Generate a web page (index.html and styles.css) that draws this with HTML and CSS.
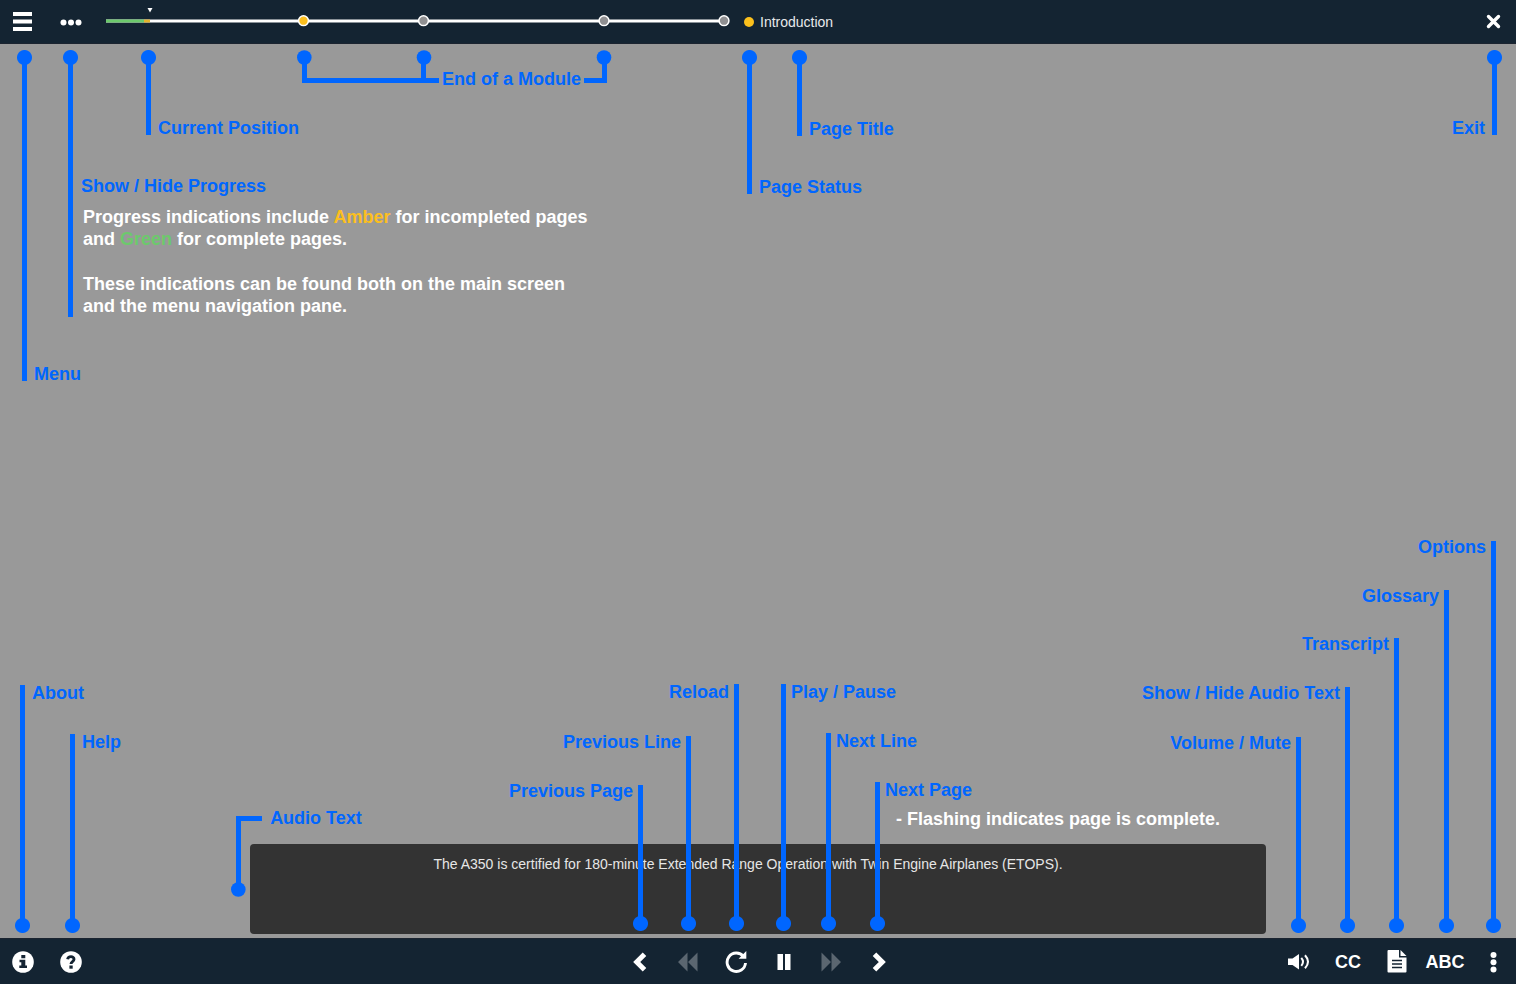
FILE: index.html
```html
<!DOCTYPE html>
<html lang="en">
<head>
<meta charset="utf-8">
<meta name="viewport" content="width=device-width, initial-scale=1">
<title>Introduction</title>
<link rel="stylesheet" href="styles.css">
</head>
<body>
<header class="bar bar-top">
  <div class="group">
    <button class="tool" type="button" aria-label="Menu">
      <svg width="20" height="20" viewBox="0 0 20 20" fill="#fff"><path d="M0 0h19v4H0zM0 7.500h19v4H0zM0 15h19v4H0z"/></svg>
    </button>
    <button class="tool" type="button" aria-label="Show or hide progress">
      <svg width="22" height="8" viewBox="0 0 22 8" fill="#fff"><circle cx="3.500" cy="4.500" r="3"/><circle cx="11" cy="4.500" r="3"/><circle cx="18.500" cy="4.500" r="3"/></svg>
    </button>
  </div>
  <svg class="progress" width="626" height="44" viewBox="0 0 626 44" role="img" aria-label="Course progress">
    <path d="M0 21h620" stroke="#fff" stroke-width="3"/>
    <path d="M0 21h38" stroke="#6cc96c" stroke-width="3"/>
    <path d="M38 21h6" stroke="#e5b32c" stroke-width="3"/>
    <path d="M41.500 8h5l-2.500 4.500z" fill="#fff"/>
    <g stroke="#fff" stroke-width="1.500" fill="#8f8f91">
      <circle cx="197.500" cy="20.700" r="4.900" fill="#fcbf1e"/>
      <circle cx="317.500" cy="20.700" r="4.900"/>
      <circle cx="498" cy="20.700" r="4.900"/>
      <circle cx="618" cy="20.700" r="4.900"/>
    </g>
  </svg>
  <div class="page-info"><span class="status"></span><h1 class="page-title">Introduction</h1></div>
  <button class="tool tool-exit" type="button" aria-label="Exit">
    <svg width="16" height="16" viewBox="0 0 16 16"><path d="M3.500 2.500l10 10M13.500 2.500l-10 10" stroke="#fff" stroke-width="3.400" stroke-linecap="round"/></svg>
  </button>
</header>

<main class="stage">
  <p class="caption">The A350 is certified for 180-minute Extended Range Operation with Twin Engine Airplanes (ETOPS).</p>

  <div class="callout top menu"><i class="pin"></i><p class="label">Menu</p></div>
  <div class="callout top show-progress"><i class="pin"></i>
    <div class="details">
      <p class="label">Show / Hide Progress</p>
      <div class="note">
        <p>Progress indications include <span class="amber">Amber</span> for incompleted pages<br>and <span class="green">Green</span> for complete pages.</p>
        <p>These indications can be found both on the main screen<br>and the menu navigation pane.</p>
      </div>
    </div>
  </div>
  <div class="callout top position"><i class="pin"></i><p class="label">Current Position</p></div>
  <div class="callout module">
    <svg width="142" height="33" viewBox="0 0 142 33" fill="#0066ff"><circle cx="7.300" cy="7.500" r="7.300"/><circle cx="127" cy="7.500" r="7.300"/><path d="M5 7h5v21h114V7h5v21h13v5H5z"/></svg>
    <p class="label">End of a Module</p>
    <svg width="28" height="33" viewBox="0 0 28 33" fill="#0066ff"><circle cx="20" cy="7.500" r="7.300"/><path d="M18 7h5v26H0v-5h18z"/></svg>
  </div>
  <div class="callout top page-status"><i class="pin"></i><p class="label">Page Status</p></div>
  <div class="callout top title"><i class="pin"></i><p class="label">Page Title</p></div>
  <div class="callout top exit"><p class="label">Exit</p><i class="pin"></i></div>

  <div class="callout bottom about"><i class="pin"></i><p class="label">About</p></div>
  <div class="callout bottom help"><i class="pin"></i><p class="label">Help</p></div>
  <div class="callout audio-text">
    <svg width="32" height="82" viewBox="0 0 32 82" fill="#0066ff"><circle cx="7.300" cy="74.500" r="7.300"/><path d="M5 1h26v5H10v68H5z"/></svg>
    <p class="label">Audio Text</p>
  </div>

  <div class="callout bottom middle before prev-page"><p class="label">Previous Page</p><i class="pin"></i></div>
  <div class="callout bottom middle before prev-line"><p class="label">Previous Line</p><i class="pin"></i></div>
  <div class="callout bottom middle reload"><p class="label">Reload</p><i class="pin"></i></div>
  <div class="callout bottom middle play"><i class="pin"></i><p class="label">Play / Pause</p></div>
  <div class="callout bottom middle next-line"><i class="pin"></i><p class="label">Next Line</p></div>
  <div class="callout bottom middle next-page"><i class="pin"></i>
    <div><p class="label">Next Page</p><p class="note flash">- Flashing indicates page is complete.</p></div>
  </div>

  <div class="callout bottom before volume"><p class="label">Volume / Mute</p><i class="pin"></i></div>
  <div class="callout bottom before captions"><p class="label">Show / Hide Audio Text</p><i class="pin"></i></div>
  <div class="callout bottom before transcript"><p class="label">Transcript</p><i class="pin"></i></div>
  <div class="callout bottom before glossary"><p class="label">Glossary</p><i class="pin"></i></div>
  <div class="callout bottom before options"><p class="label">Options</p><i class="pin"></i></div>
</main>

<footer class="bar bar-bottom">
  <div class="group">
    <button class="tool" type="button" aria-label="About">
      <svg width="22" height="22" viewBox="0 0 22 22"><circle cx="11" cy="11" r="10.800" fill="#fff"/><path d="M9.300 4h4v3.200h-4zM7.500 8.800h5.800v5.700H15V17H7.300v-2.500h2v-3.300H7.500z" fill="#152433"/></svg>
    </button>
    <button class="tool" type="button" aria-label="Help">
      <svg width="22" height="22" viewBox="0 0 22 22"><circle cx="11" cy="11" r="10.800" fill="#fff"/><path d="M7.600 8.300C8.200 4.800 14 4.800 14 8.200c0 2.500-3 2.200-3 4.800" fill="none" stroke="#152433" stroke-width="2.900"/><path d="M9.400 14.500h3.300v3.200H9.400z" fill="#152433"/></svg>
    </button>
  </div>
  <div class="group group-play">
    <button class="tool" type="button" aria-label="Previous page">
      <svg width="20" height="22" viewBox="0 0 20 22"><path d="M14.500 3.200L6.700 11l7.800 7.800" fill="none" stroke="#fff" stroke-width="5"/></svg>
    </button>
    <button class="tool" type="button" aria-label="Previous line" disabled>
      <svg width="22" height="22" viewBox="0 0 22 22" fill="#5b6670"><path d="M10.500 1.500v19L1 11zM20.500 1.500v19L11 11z"/></svg>
    </button>
    <button class="tool" type="button" aria-label="Reload">
      <svg width="24" height="24" viewBox="0 0 24 24"><path d="M19.500 6.500A9.200 9.200 0 1 0 21.500 13" fill="none" stroke="#fff" stroke-width="2.900"/><path d="M22.300 1v7.700h-7.700z" fill="#fff"/></svg>
    </button>
    <button class="tool" type="button" aria-label="Pause">
      <svg width="16" height="18" viewBox="0 0 16 18" fill="#fff"><path d="M1.500 1H7v16H1.500zM9 1h5.500v16H9z"/></svg>
    </button>
    <button class="tool" type="button" aria-label="Next line" disabled>
      <svg width="22" height="22" viewBox="0 0 22 22" fill="#5b6670"><path d="M.5 1.500v19L10 11zM10.500 1.500v19L20 11z"/></svg>
    </button>
    <button class="tool" type="button" aria-label="Next page">
      <svg width="20" height="22" viewBox="0 0 20 22"><path d="M4.500 3.200l7.800 7.800-7.800 7.800" fill="none" stroke="#fff" stroke-width="5"/></svg>
    </button>
  </div>
  <div class="group group-options">
    <button class="tool" type="button" aria-label="Volume">
      <svg width="22" height="20" viewBox="0 0 22 20"><path d="M0 6.500h4.500L11 2v15.500L4.500 13H0z" fill="#fff"/><path d="M13.300 5.800q3.400 4 0 8M17 3.300q6 6.500 0 13" fill="none" stroke="#fff" stroke-width="2"/></svg>
    </button>
    <button class="tool tool-text" type="button">CC</button>
    <button class="tool" type="button" aria-label="Transcript">
      <svg width="20" height="23" viewBox="0 0 20 23"><path d="M1.500 0H12v7.500h7.500v14q0 1-1 1h-17q-1 0-1-1V1q0-1 1-1z" fill="#fff"/><path d="M13.500 0l6 6h-6z" fill="#fff"/><path d="M5 10.500h10M5 14h10M5 17.500h10" stroke="#152433" stroke-width="1.500"/></svg>
    </button>
    <button class="tool tool-text tool-abc" type="button">ABC</button>
    <button class="tool" type="button" aria-label="Options">
      <svg width="8" height="22" viewBox="0 0 8 22" fill="#fff"><circle cx="4.500" cy="4" r="3"/><circle cx="4.500" cy="11.300" r="3"/><circle cx="4.500" cy="18.500" r="3"/></svg>
    </button>
  </div>
</footer>
</body>
</html>
```

FILE: styles.css
```css
* { box-sizing: border-box; }

body {
  margin: 0;
  min-height: 100vh;
  display: flex;
  flex-direction: column;
  background: #999;
  color: #fff;
  font-family: "Liberation Sans", Arial, sans-serif;
}

p, h1 { margin: 0; }
svg { display: block; flex: none; }

/* Bars */
.bar { background: #142432; }

.bar-top {
  display: flex;
  align-items: center;
  height: 44px;
  border-bottom: 1px solid #1b2430;
}

.bar-bottom {
  display: grid;
  grid-template-columns: 1fr auto 1fr;
  align-items: center;
  height: 46px;
  border-top: 1px solid #1b2430;
}

.group { display: flex; gap: 2px; }
.group-play { padding-left: 3px; }
.group-options { justify-content: flex-end; gap: 3px; }

.tool {
  display: flex;
  align-items: center;
  justify-content: center;
  width: 46px;
  height: 44px;
  padding: 0;
  border: 0;
  background: none;
  color: #fff;
  cursor: pointer;
}
.tool:disabled { cursor: default; }
.tool-exit { margin-left: auto; }
.tool-text { padding-top: 2px; font: bold 18px "Liberation Sans", Arial, sans-serif; }
.tool-abc { width: 44px; }

.progress { margin-left: 12px; }

.page-info { display: flex; align-items: center; gap: 6px; margin-left: 12px; }
.status { width: 10px; height: 10px; border-radius: 50%; background: #fcc01c; }
.page-title { font-size: 14px; line-height: 20px; font-weight: normal; color: #e8eaec; }

/* Stage */
.stage {
  position: relative;
  flex: 1;
  display: flex;
  flex-direction: column;
  justify-content: flex-end;
  align-items: center;
  padding-bottom: 4px;
}

.caption {
  width: 67%;
  height: 90px;
  padding: 11px 20px 0 0;
  border-radius: 4px;
  background: #333;
  color: #e6e6e6;
  font-size: 14px;
  line-height: 18px;
  text-align: center;
}

/* Callouts */
.callout { position: absolute; display: flex; white-space: nowrap; }
.top { top: 6px; align-items: flex-end; gap: 2px; }
.bottom { bottom: 5px; align-items: flex-start; gap: 2px; }
.middle { bottom: 7px; gap: 0; }
.before { gap: 0; }

.label { color: #0066ff; font-size: 18px; line-height: 20px; font-weight: bold; }
.top > .label { margin-bottom: -3px; }
.bottom .label { margin-top: -2px; }
.before .label { margin-top: -4px; }

.pin {
  flex: none;
  align-self: stretch;
  width: 15px;
  background:
    radial-gradient(circle at 50% 50%, #0066ff 7px, transparent 8px) top / 15px 15px no-repeat,
    linear-gradient(#0066ff, #0066ff) center bottom / 5px calc(100% - 7px) no-repeat;
}
.bottom .pin {
  background:
    radial-gradient(circle at 50% 50%, #0066ff 7px, transparent 8px) bottom / 15px 15px no-repeat,
    linear-gradient(#0066ff, #0066ff) center top / 5px calc(100% - 7px) no-repeat;
}

.note { font-size: 18px; line-height: 22px; font-weight: bold; }
.note p + p { margin-top: 23px; }
.details .note { margin-top: 10px; padding-left: 2px; }
.flash { margin-top: 8px; padding-left: 11px; }
.amber { color: #fcbf1e; }
.green { color: #6cc96c; }

.menu { left: 17px; height: 331px; }
.show-progress { left: 63px; height: 267px; gap: 3px; }
.position { left: 141px; height: 85px; }
.module { left: 297px; top: 6px; gap: 3px; align-items: flex-end; }
.module .label { margin-bottom: -6px; }
.page-status { left: 742px; height: 144px; }
.title { left: 792px; height: 86px; }
.exit { right: 14px; height: 85px; }

.about { left: 15px; height: 248px; }
.help { left: 65px; height: 199px; }
.audio-text { left: calc(16.5% - 19px); bottom: 41px; gap: 7px; }
.audio-text .label { margin-top: -7px; }

.prev-page { right: calc(50% + 110px); height: 146px; }
.prev-line { right: calc(50% + 62px); height: 195px; }
.reload { right: calc(50% + 14px); height: 247px; }
.play { left: calc(50% + 18px); height: 247px; }
.next-line { left: calc(50% + 63px); height: 198px; }
.next-page { left: calc(50% + 112px); height: 149px; }

.volume { right: 210px; height: 196px; }
.captions { right: 161px; height: 246px; }
.transcript { right: 112px; height: 295px; }
.glossary { right: 62px; height: 343px; }
.options { right: 15px; height: 392px; }
```
